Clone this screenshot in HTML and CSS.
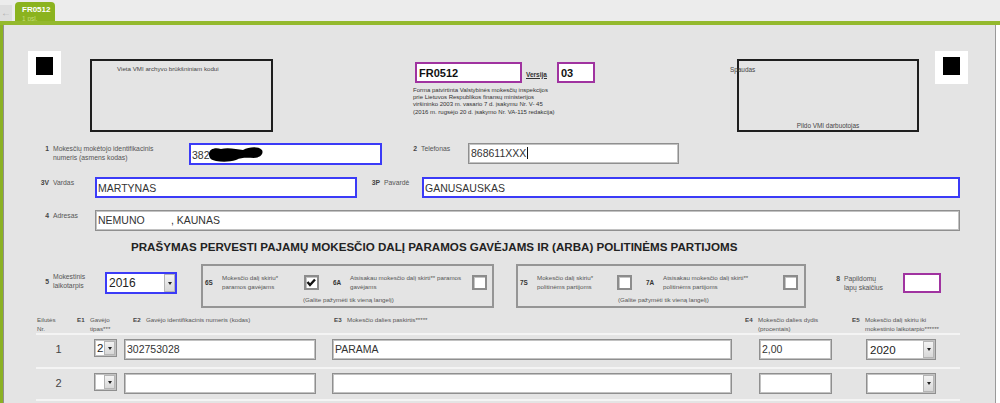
FILE: index.html
```html
<!DOCTYPE html>
<html>
<head>
<title>FR0512</title>
<link rel="stylesheet" href="styles.css">
</head>
<body>
<div class="tabbar">
<span class="back">&#x2190;</span>
<div class="tab">
<b>FR0512</b>
<span>1 psl.</span>
</div>
</div>
<div class="sheet">
<div class="form">

<div class="head">
<div class="mark"><span></span></div>
<div class="barcode">Vieta VMI archyvo brūkšniniam kodui</div>
<div class="formid">
<div class="idline">
<div class="field purple code">FR0512</div>
<a class="versija">Versija</a>
<div class="field purple ver">03</div>
</div>
<p class="approved">Forma patvirtinta Valstybinės mokesčių inspekcijos<br>prie Lietuvos Respublikos finansų ministerijos<br>viršininko 2003 m. vasario 7 d. įsakymu Nr. V- 45<br>(2016 m. rugsėjo 20 d. įsakymo Nr. VA-115 redakcija)</p>
</div>
<div class="stamp">
<span class="stamp-top">Spaudas</span>
<span class="stamp-bottom">Pildo VMI darbuotojas</span>
</div>
<div class="mark"><span></span></div>
</div>

<div class="row row-id">
<div class="lbl w-id"><span class="n">1</span><span>Mokesčių mokėtojo identifikacinis<br>numeris (asmens kodas)</span></div>
<div class="field blue f-id">382<svg class="blob" width="56" height="18" viewBox="0 0 56 18"><path d="M1 9 C1 4 7 2 13 4 C19 2 29 4 35 5 C41 2 50 1 54 5 C56 9 52 13 46 13 C40 13 34 12 28 15 C22 17 14 17 8 16 C3 15 1 13 1 9 Z" fill="#000"/></svg></div>
<div class="lbl w-tel"><span class="n">2</span><span>Telefonas</span></div>
<div class="field f-tel">868611XXX<span class="caret"></span></div>
</div>

<div class="row row-name">
<div class="lbl w-short"><span class="n">3V</span><span>Vardas</span></div>
<div class="field blue f-name">MARTYNAS</div>
<div class="lbl w-sur"><span class="n">3P</span><span>Pavardė</span></div>
<div class="field blue f-sur">GANUSAUSKAS</div>
</div>

<div class="row row-addr">
<div class="lbl w-short"><span class="n">4</span><span>Adresas</span></div>
<div class="field f-addr">NEMUNO         , KAUNAS</div>
</div>

<h2 class="title">PRAŠYMAS PERVESTI PAJAMŲ MOKESČIO DALĮ PARAMOS GAVĖJAMS IR (ARBA) POLITINĖMS PARTIJOMS</h2>

<div class="row row-period">
<div class="lbl w-period"><span class="n">5</span><span>Mokestinis<br>laikotarpis</span></div>
<div class="sel blue s-period"><span class="val">2016</span><span class="btn"></span></div>

<div class="choice c-support">
<div class="opts">
<span class="code">6S</span>
<span class="txt t1">Mokesčio dalį skiriu*<br>paramos gavėjams</span>
<span class="cb checked"><svg width="11" height="11" viewBox="0 0 11 11"><path d="M1.5 5 L4 8 L9 2.5" fill="none" stroke="#111" stroke-width="2.4"/></svg></span>
<span class="code gap">6A</span>
<span class="txt t2">Atsisakau mokesčio dalį skirti** paramos<br>gavėjams</span>
<span class="cb"></span>
</div>
<div class="note">(Galite pažymėti tik vieną langelį)</div>
</div>

<div class="choice c-party">
<div class="opts">
<span class="code">7S</span>
<span class="txt t1">Mokesčio dalį skiriu*<br>politinėms partijoms</span>
<span class="cb"></span>
<span class="code gap">7A</span>
<span class="txt t2">Atsisakau mokesčio dalį skirti**<br>politinėms partijoms</span>
<span class="cb"></span>
</div>
<div class="note">(Galite pažymėti tik vieną langelį)</div>
</div>

<div class="lbl w-pages"><span class="n">8</span><span>Papildomų<br>lapų skaičius</span></div>
<div class="field purple f-pages"></div>
</div>

<div class="table">
<div class="thead">
<div class="th"><span>Eilutės<br>Nr.</span></div>
<div class="th"><span class="code">E1</span><span>Gavėjo<br>tipas***</span></div>
<div class="th"><span class="code">E2</span><span>Gavėjo identifikacinis numeris (kodas)</span></div>
<div class="th"><span class="code">E3</span><span>Mokesčio dalies paskirtis*****</span></div>
<div class="th"><span class="code">E4</span><span>Mokesčio dalies dydis<br>(procentais)</span></div>
<div class="th"><span class="code">E5</span><span>Mokesčio dalį skiriu iki<br>mokestinio laikotarpio******</span></div>
</div>

<div class="trow">
<span class="rn">1</span>
<div class="sel s-type"><span class="val">2</span><span class="btn"></span></div>
<div class="field e2">302753028</div>
<div class="field e3">PARAMA</div>
<div class="field e4">2,00</div>
<div class="sel s-year"><span class="val">2020</span><span class="btn"></span></div>
</div>

<div class="trow">
<span class="rn">2</span>
<div class="sel s-type"><span class="val"></span><span class="btn"></span></div>
<div class="field e2"></div>
<div class="field e3"></div>
<div class="field e4"></div>
<div class="sel s-year"><span class="val"></span><span class="btn"></span></div>
</div>
</div>

</div>
</div>
</body>
</html>
```

FILE: styles.css
```css
body {
	background-color: #ececec;
	font-family: "Liberation Sans", Arial, sans-serif;
	margin: 0;
	overflow: hidden;
}

.tabbar {
	align-items: flex-end;
	display: flex;
	height: 21px;
}

.back {
	background-color: #dedede;
	color: #b0b0b0;
	font-size: 10px;
	height: 16px;
	line-height: 15px;
	text-align: center;
	width: 12px;
}

.tab {
	background-color: #8bb31f;
	border-radius: 4px 4px 0 0;
	box-sizing: border-box;
	display: flex;
	flex-direction: column;
	height: 19px;
	margin-left: 3px;
	overflow: hidden;
	padding: 3px 0 0 7px;
	width: 40px;
}

.tab b {
	color: #fff;
	font-size: 8px;
	line-height: 9px;
}

.tab span {
	color: #c4dd78;
	font-size: 6.5px;
	line-height: 9px;
}

.sheet {
	background-color: #fff;
	border-top: 4px solid #94b92d;
	display: flex;
	height: 378px;
}

.form {
	background-color: #e4e4e4;
	border-left: 3px solid #8bb124;
	border-right: 1px solid #9a9a9a;
	box-shadow: inset 1px 0 0 #8f8f8f;
	overflow: hidden;
	width: 992px;
}

/* header */

.head {
	align-items: flex-start;
	display: flex;
	padding-top: 26px;
}

.mark {
	background-color: #fff;
	box-sizing: border-box;
	display: flex;
	height: 33px;
	justify-content: center;
	padding-top: 6px;
	width: 33px;
}

.mark span {
	background-color: #000;
	height: 18px;
	width: 17px;
}

.head .mark:first-child {
	margin-left: 25px;
}

.barcode {
	border: 2px solid #1e1e1e;
	box-sizing: border-box;
	color: #444;
	font-size: 6.2px;
	height: 73px;
	margin: 8px 0 0 29px;
	padding: 4px 0 0 25px;
	width: 183px;
}

.formid {
	margin: 11px 0 0 140px;
	width: 184px;
}

.idline {
	align-items: center;
	display: flex;
}

.field {
	background-color: #fff;
	border: 1px solid #8f8f8f;
	box-shadow: inset 0 0 0 1px #c2c2c2;
	box-sizing: border-box;
	color: #333;
	font-size: 10.5px;
	height: 21px;
	line-height: 19px;
	padding-left: 2px;
	white-space: pre;
}

.field.blue {
	border: 2px solid #3b3bf7;
	box-shadow: none;
	padding-left: 1px;
}

.field.purple {
	border: 2px solid #a033a0;
	box-shadow: none;
}

.code.field {
	color: #111;
	font-size: 11px;
	font-weight: bold;
	margin-left: 2px;
	width: 107px;
}

.versija {
	color: #333;
	font-size: 6.5px;
	font-weight: bold;
	margin: 3px 10px 0 4px;
	text-decoration: underline;
}

.ver.field {
	color: #111;
	font-size: 11px;
	font-weight: bold;
	width: 38px;
}

.approved {
	color: #333;
	font-size: 6px;
	line-height: 7.2px;
	margin: 4px 0 0;
	white-space: nowrap;
}

.stamp {
	border: 2px solid #1e1e1e;
	box-sizing: border-box;
	color: #444;
	display: flex;
	flex-direction: column;
	font-size: 6.4px;
	height: 73px;
	justify-content: space-between;
	margin: 8px 0 0 140px;
	width: 182px;
}

.stamp-top {
	margin: 5px 0 0 -9px;
}

.stamp-bottom {
	line-height: 8px;
	text-align: center;
}

.stamp + .mark {
	margin-left: 16px;
}

/* rows */

.row {
	align-items: flex-start;
	display: flex;
}

.row-id {
	margin-top: 11px;
}

.row-name,
.row-addr {
	margin-top: 12px;
}

.lbl {
	box-sizing: border-box;
	color: #555;
	display: flex;
	font-size: 6.8px;
	line-height: 9px;
	padding-top: 1px;
}

.lbl .n {
	color: #444;
	flex: none;
	font-weight: bold;
	margin-right: 4px;
	text-align: right;
	width: 16px;
}

.w-id {
	padding-left: 30px;
	width: 186px;
}

.w-tel {
	padding-left: 19px;
	width: 86px;
}

.w-short {
	padding-left: 30px;
	width: 92px;
}

.w-sur {
	padding-left: 7px;
	width: 65px;
}

.f-id {
	height: 22px;
	line-height: 18px;
	width: 193px;
}

.blob {
	margin-left: -2px;
	vertical-align: -4px;
}

.f-tel {
	width: 211px;
}

.caret {
	background-color: #111;
	display: inline-block;
	height: 12px;
	margin-left: 1px;
	vertical-align: -2px;
	width: 1px;
}

.f-name {
	width: 262px;
}

.f-sur {
	width: 538px;
}

.f-addr {
	width: 865px;
}

.title {
	color: #222;
	font-size: 11.6px;
	line-height: 14px;
	margin: 9px 0 0 128px;
}

/* period and choices */

.row-period {
	margin-top: 10px;
}

.w-period {
	align-items: center;
	padding: 8px 0 0 30px;
	width: 102px;
}

.sel {
	background-color: #fff;
	border: 1px solid #8f8f8f;
	box-shadow: inset 0 0 0 1px #c2c2c2;
	box-sizing: border-box;
	color: #222;
	display: flex;
	font-size: 11.5px;
	height: 21px;
	padding: 1px;
}

.sel.blue {
	border: 2px solid #3b3bf7;
	box-shadow: none;
	padding: 0;
}

.sel .val {
	flex: 1;
	line-height: 18px;
	padding-left: 1px;
}

.sel .btn {
	align-items: center;
	background: linear-gradient(#f3f3f3, #d8d8d8);
	border: 1px solid #b5b5b5;
	box-sizing: border-box;
	display: flex;
	justify-content: center;
	width: 11px;
}

.sel .btn::after {
	border-left: 2.5px solid transparent;
	border-right: 2.5px solid transparent;
	border-top: 3px solid #222;
	content: "";
}

.s-period {
	font-size: 12px;
	height: 22px;
	margin-top: 8px;
	width: 72px;
}

.s-period .val {
	padding-left: 2px;
}

.choice {
	border: 2px solid #959595;
	box-sizing: border-box;
	display: flex;
	flex-direction: column;
	height: 44px;
	padding: 7px 0 0 2px;
}

.c-support {
	margin-left: 24px;
	width: 293px;
}

.c-party {
	margin-left: 22px;
	width: 290px;
}

.opts {
	align-items: center;
	display: flex;
	font-size: 6.2px;
	line-height: 9px;
}

.opts .code {
	color: #333;
	font-size: 6.4px;
	font-weight: bold;
	width: 17px;
}

.opts .gap {
	margin-left: 14px;
}

.opts .txt {
	color: #555;
}

.c-support .t1 {
	width: 82px;
}

.c-support .t2 {
	width: 122px;
}

.c-party .t1 {
	width: 80px;
}

.c-party .t2 {
	width: 120px;
}

.cb {
	align-items: center;
	background-color: #fff;
	border: 2px solid #8c8c8c;
	box-shadow: inset 1px 1px 0 #c4c4c4;
	box-sizing: border-box;
	display: flex;
	height: 15px;
	justify-content: center;
	width: 15px;
}

.note {
	color: #555;
	font-size: 6.2px;
	line-height: 8px;
	margin-top: 5px;
	padding-left: 98px;
}

.w-pages {
	padding: 10px 0 0 18px;
	width: 97px;
}

.f-pages {
	height: 20px;
	margin-top: 9px;
	width: 38px;
}

/* table */

.table {
	border-bottom: 2px solid #f4f4f4;
	margin: 7px 0 0 33px;
	width: 924px;
}

.thead {
	color: #555;
	display: grid;
	font-size: 6.2px;
	grid-template-columns: 41px 56px 201px 411px 107px 108px;
	line-height: 9px;
}

.thead .th {
	display: flex;
}

.thead .th:first-child {
	padding-left: 1px;
}

.thead .code {
	color: #444;
	flex: none;
	font-weight: bold;
	width: 13px;
}

.trow {
	align-items: flex-start;
	border-top: 2px solid #f4f4f4;
	display: flex;
	padding: 4px 0 7px;
}

.trow + .trow {
	padding-bottom: 5px;
}

.rn {
	color: #444;
	font-size: 11px;
	line-height: 21px;
	text-align: center;
	width: 45px;
}

.s-type {
	height: 18px;
	margin-left: 13px;
	width: 23px;
}

.s-type .val {
	line-height: 15px;
}

.e2 {
	margin-left: 7px;
	width: 192px;
}

.e3 {
	margin-left: 16px;
	width: 400px;
}

.e4 {
	margin-left: 27px;
	width: 73px;
}

.s-year {
	margin-left: 34px;
	width: 70px;
}

.s-year .val {
	padding-left: 2px;
}
```
